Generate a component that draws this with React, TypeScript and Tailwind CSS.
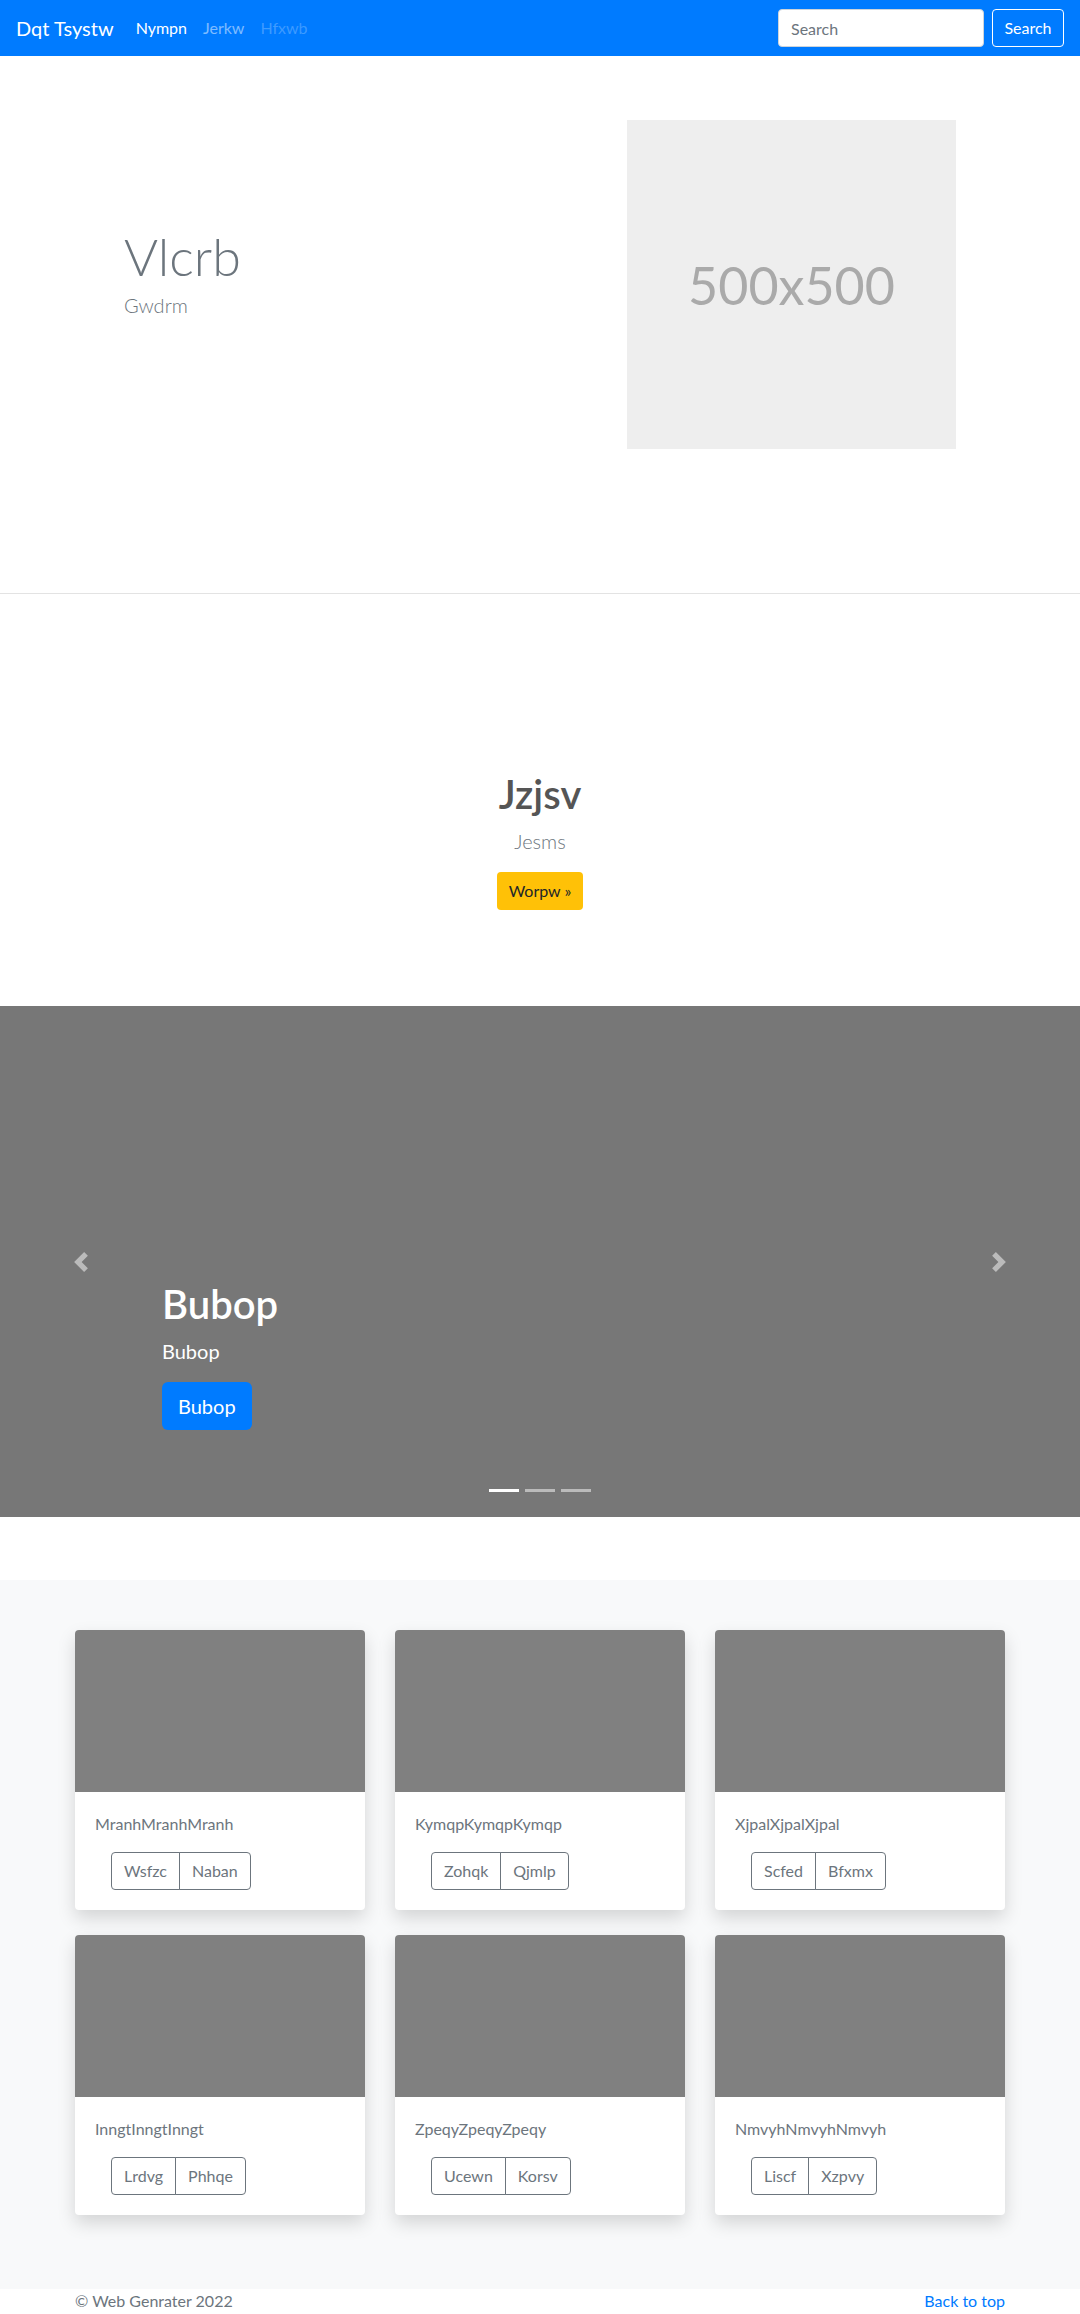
const cards = [
  { title: "MranhMranhMranh", a: "Wsfzc", b: "Naban" },
  { title: "KymqpKymqpKymqp", a: "Zohqk", b: "Qjmlp" },
  { title: "XjpalXjpalXjpal", a: "Scfed", b: "Bfxmx" },
  { title: "InngtInngtInngt", a: "Lrdvg", b: "Phhqe" },
  { title: "ZpeqyZpeqyZpeqy", a: "Ucewn", b: "Korsv" },
  { title: "NmvyhNmvyhNmvyh", a: "Liscf", b: "Xzpvy" },
];

function Navbar() {
  return (
    <nav className="flex h-[56px] items-center bg-[#007bff] px-[16px]">
      <a className="mr-[14px] text-[20px] leading-[30px] text-white">Dqt Tsystw</a>
      <ul className="flex text-[16px] leading-[24px]">
        <li className="px-[8px] text-white">Nympn</li>
        <li className="px-[8px] text-white/50">Jerkw</li>
        <li className="px-[8px] text-white/25">Hfxwb</li>
      </ul>
      <form className="ml-auto flex items-center gap-[8px]">
        <input
          type="text"
          placeholder="Search"
          className="h-[38px] w-[206px] rounded-[4px] border border-[#ced4da] bg-white px-[12px] text-[16px] text-[#495057] outline-none placeholder:text-[#6c757d]"
        />
        <button type="button" className="h-[38px] w-[72px] rounded-[4px] border border-white text-[16px] text-white">
          Search
        </button>
      </form>
    </nav>
  );
}

function Hero() {
  return (
    <section className="flex items-center justify-between border-b border-[#e3e3e3] px-[124px] pb-[144px] pt-[64px]">
      <div>
        <h1 className="mb-[3px] text-[52px] font-light leading-[1.2] text-[#6c757d]">Vlcrb</h1>
        <p className="mb-[24px] text-[20px] font-light leading-[30px] text-[#6c757d]">Gwdrm</p>
      </div>
      <div className="flex h-[329px] w-[329px] items-center justify-center bg-[#eeeeee]">
        <span className="text-[52px] leading-none text-[#aaaaaa]">500x500</span>
      </div>
    </section>
  );
}

function Feature() {
  return (
    <section className="flex flex-col items-center pb-[96px] pt-[176px] text-center">
      <h1 className="mb-[8px] text-[40px] font-semibold leading-[48px] text-[#555555]">Jzjsv</h1>
      <p className="mb-[16px] text-[20px] font-light leading-[30px] text-[#6c757d]">Jesms</p>
      <button type="button" className="h-[38px] rounded-[4px] bg-[#ffc107] px-[12px] text-[16px] text-[#212529]">
        Worpw »
      </button>
    </section>
  );
}

function Arrow({ flip }: { flip?: boolean }) {
  return (
    <svg viewBox="0 0 8 8" className={flip ? "h-[20px] w-[20px] rotate-180" : "h-[20px] w-[20px]"} fill="rgba(255,255,255,0.5)">
      <path d="M5.25 0l-4 4 4 4 1.5-1.5L4.25 4l2.5-2.5L5.25 0z" />
    </svg>
  );
}

function Carousel() {
  return (
    <section className="relative flex h-[511px] flex-col justify-end bg-[#777777] px-[162px] pb-[51px]">
      <div className="pb-[20px] text-white">
        <h1 className="mb-[8px] text-[40px] font-semibold leading-[48px]">Bubop</h1>
        <p className="mb-[16px] text-[20px] leading-[30px]">Bubop</p>
        <p className="mb-[16px]">
          <button type="button" className="h-[48px] rounded-[6px] bg-[#007bff] px-[16px] text-[20px] text-white">
            Bubop
          </button>
        </p>
      </div>
      <div className="absolute left-[71px] top-[246px]">
        <Arrow />
      </div>
      <div className="absolute right-[71px] top-[246px]">
        <Arrow flip />
      </div>
      <div className="absolute bottom-[25px] left-0 right-0 flex justify-center gap-[6px]">
        <span className="h-[3px] w-[30px] bg-white" />
        <span className="h-[3px] w-[30px] bg-white/50" />
        <span className="h-[3px] w-[30px] bg-white/50" />
      </div>
    </section>
  );
}

function Album() {
  return (
    <section className="mt-[63px] bg-[#f8f9fa] pb-[74px] pt-[50px]">
      <div className="mx-auto grid w-[930px] grid-cols-3 gap-x-[30px] gap-y-[25px]">
        {cards.map((card) => (
          <div key={card.title} className="overflow-hidden rounded-[4px] bg-white shadow-[0_8px_18px_rgba(0,0,0,0.15)]">
            <div className="h-[162px] bg-[#808080]" />
            <div className="p-[20px]">
              <p className="mb-[16px] text-[16px] leading-[24px] text-[#6c757d]">{card.title}</p>
              <div className="ml-[16px] inline-flex">
                <button type="button" className="h-[38px] rounded-l-[4px] border border-[#6c757d] px-[12px] text-[16px] text-[#6c757d]">
                  {card.a}
                </button>
                <button type="button" className="-ml-px h-[38px] rounded-r-[4px] border border-[#6c757d] px-[12px] text-[16px] text-[#6c757d]">
                  {card.b}
                </button>
              </div>
            </div>
          </div>
        ))}
      </div>
    </section>
  );
}

function Footer() {
  return (
    <footer className="pb-[16px]">
      <div className="mx-auto flex w-[930px] justify-between text-[16px] leading-[24px]">
        <p className="text-[#6c757d]">© Web Genrater 2022</p>
        <a className="text-[#007bff]">Back to top</a>
      </div>
    </footer>
  );
}

export default function App() {
  return (
    <div className="min-h-screen bg-white font-['Lato',sans-serif]">
      <Navbar />
      <Hero />
      <Feature />
      <Carousel />
      <Album />
      <Footer />
    </div>
  );
}
